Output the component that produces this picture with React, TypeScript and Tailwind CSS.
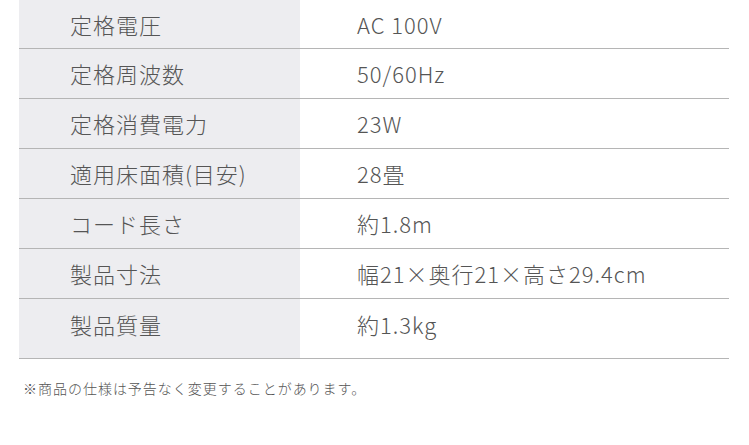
const specs: { label: string; value: string }[] = [
  { label: "定格電圧", value: "AC 100V" },
  { label: "定格周波数", value: "50/60Hz" },
  { label: "定格消費電力", value: "23W" },
  { label: "適用床面積(目安)", value: "28畳" },
  { label: "コード長さ", value: "約1.8m" },
  { label: "製品寸法", value: "幅21×奥行21×高さ29.4cm" },
  { label: "製品質量", value: "約1.3kg" },
];

export default function App() {
  return (
    <div
      className="w-[749px] h-[445px] bg-white overflow-hidden font-light"
      style={{ fontFamily: '"Noto Sans CJK JP", "Noto Sans", sans-serif' }}
    >
      <div className="ml-[19px] w-[710px]">
        {specs.map((row, i) => {
          const last = i === specs.length - 1;
          return (
            <div
              key={row.label}
              className={
                "flex border-b border-[#b5b5b5] text-[22px] tracking-[0.045em] text-[#555]" +
                (i === 0 ? " h-[49px]" : last ? " h-[60px]" : " h-[50px]")
              }
            >
              <div className={"w-[281px] bg-[#ededf0] flex items-center pl-[51px]" + (last ? " pb-[9px]" : "")}>
                {row.label}
              </div>
              <div className={"flex-1 flex items-center pl-[57px]" + (last ? " pb-[9px]" : "")}>{row.value}</div>
            </div>
          );
        })}
      </div>
      <p className="mt-[19px] ml-[23px] text-[14px] tracking-[0.07em] text-[#555]">
        ※商品の仕様は予告なく変更することがあります。
      </p>
    </div>
  );
}
